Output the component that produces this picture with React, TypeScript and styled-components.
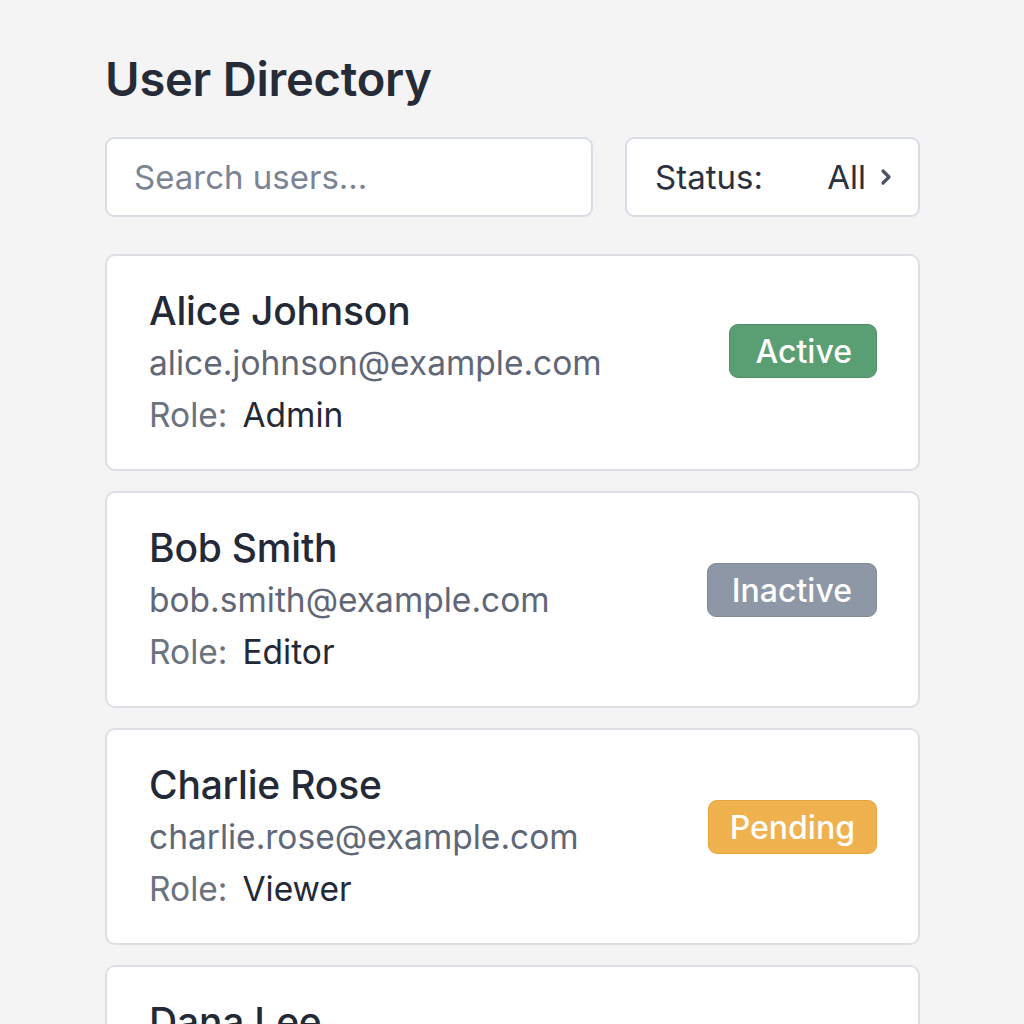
import React from "react";
import styled, { createGlobalStyle } from "styled-components";

const Global = createGlobalStyle`
  html, body { margin: 0; padding: 0; background: #f4f4f5; }
  body { font-family: Inter, "Noto Sans", sans-serif; color: #1f2937; }
`;

const Page = styled.div`
  padding: 48px 104px 0 105px;
  display: flex;
  flex-direction: column;
  height: 1024px;
  overflow: hidden;
  box-sizing: border-box;
`;

const Title = styled.h1`
  margin: 0 0 28px;
  font-size: 47px;
  line-height: 61px;
  font-weight: 600;
  color: #252b37;
  letter-spacing: -0.2px;
`;

const Toolbar = styled.div`
  display: flex;
  gap: 32px;
  margin-bottom: 37px;
`;

const SearchBox = styled.input`
  flex: 1;
  min-width: 0;
  height: 80px;
  box-sizing: border-box;
  border: 2px solid #d8dce4;
  border-radius: 9px;
  background: #fff;
  padding: 0 27px;
  font-family: inherit;
  font-size: 33px;
  color: #1f2937;
  outline: none;
  &::placeholder { color: #7b8494; }
`;

const StatusButton = styled.button`
  width: 295px;
  flex-shrink: 0;
  height: 80px;
  box-sizing: border-box;
  border: 2px solid #d8dce4;
  border-radius: 9px;
  background: #fff;
  display: flex;
  align-items: center;
  padding: 0 26px 0 28px;
  font-family: inherit;
  font-size: 33px;
  color: #2b3140;
`;

const StatusValue = styled.span`
  margin-left: auto;
  margin-right: 14px;
`;

const List = styled.div`
  display: flex;
  flex-direction: column;
  gap: 20px;
`;

const Card = styled.div`
  background: #fff;
  border: 2px solid #dcdfe6;
  border-radius: 10px;
  height: 217px;
  box-sizing: border-box;
  display: flex;
  align-items: center;
  padding: 0 41px 0 42px;
  flex-shrink: 0;
`;

const Info = styled.div`
  flex: 1;
  display: flex;
  flex-direction: column;
`;

const Name = styled.div`
  font-size: 39px;
  line-height: 52px;
  font-weight: 500;
  color: #232936;
  letter-spacing: -0.2px;
`;

const Email = styled.div`
  font-size: 33.5px;
  line-height: 52px;
  color: #5f6778;
`;

const Role = styled.div`
  font-size: 33.5px;
  line-height: 52px;
  color: #6b7280;
`;

const RoleValue = styled.span`
  color: #232936;
  margin-left: 15px;
`;

const badgeColors: Record<string, { bg: string; border: string }> = {
  Active: { bg: "#5a9e73", border: "#4e8f66" },
  Inactive: { bg: "#8e97a6", border: "#808a9a" },
  Pending: { bg: "#f0b14f", border: "#e8a53e" },
};

const Badge = styled.span<{ $status: string }>`
  align-self: flex-start;
  margin-top: ${(p) => (p.$status === "Active" ? "68px" : "70px")};
  background: ${(p) => badgeColors[p.$status].bg};
  border: 1px solid ${(p) => badgeColors[p.$status].border};
  color: #fff;
  border-radius: 9px;
  height: 54px;
  box-sizing: border-box;
  padding: 0 ${(p) => (p.$status === "Pending" ? "21px" : "24px")} 0
    ${(p) => (p.$status === "Active" ? "26px" : p.$status === "Pending" ? "21px" : "24px")};
  display: flex;
  align-items: center;
  font-size: 32px;
  font-weight: 500;
`;

const users = [
  { name: "Alice Johnson", email: "alice.johnson@example.com", role: "Admin", status: "Active" },
  { name: "Bob Smith", email: "bob.smith@example.com", role: "Editor", status: "Inactive" },
  { name: "Charlie Rose", email: "charlie.rose@example.com", role: "Viewer", status: "Pending" },
  { name: "Dana Lee", email: "dana.lee@example.com", role: "Viewer", status: "Active" },
];

const Chevron = () => (
  <svg width="12" height="22" viewBox="0 0 12 22" fill="none">
    <path d="M3 5l6 6-6 6" stroke="#4b5363" strokeWidth="3.2" strokeLinecap="round" strokeLinejoin="round" />
  </svg>
);

export default function App() {
  return (
    <>
      <Global />
      <Page>
        <Title>User Directory</Title>
        <Toolbar>
          <SearchBox placeholder="Search users..." />
          <StatusButton>
            Status:
            <StatusValue>All</StatusValue>
            <Chevron />
          </StatusButton>
        </Toolbar>
        <List>
          {users.map((u) => (
            <Card key={u.name}>
              <Info>
                <Name>{u.name}</Name>
                <Email>{u.email}</Email>
                <Role>
                  Role:<RoleValue>{u.role}</RoleValue>
                </Role>
              </Info>
              <Badge $status={u.status}>{u.status}</Badge>
            </Card>
          ))}
        </List>
      </Page>
    </>
  );
}
